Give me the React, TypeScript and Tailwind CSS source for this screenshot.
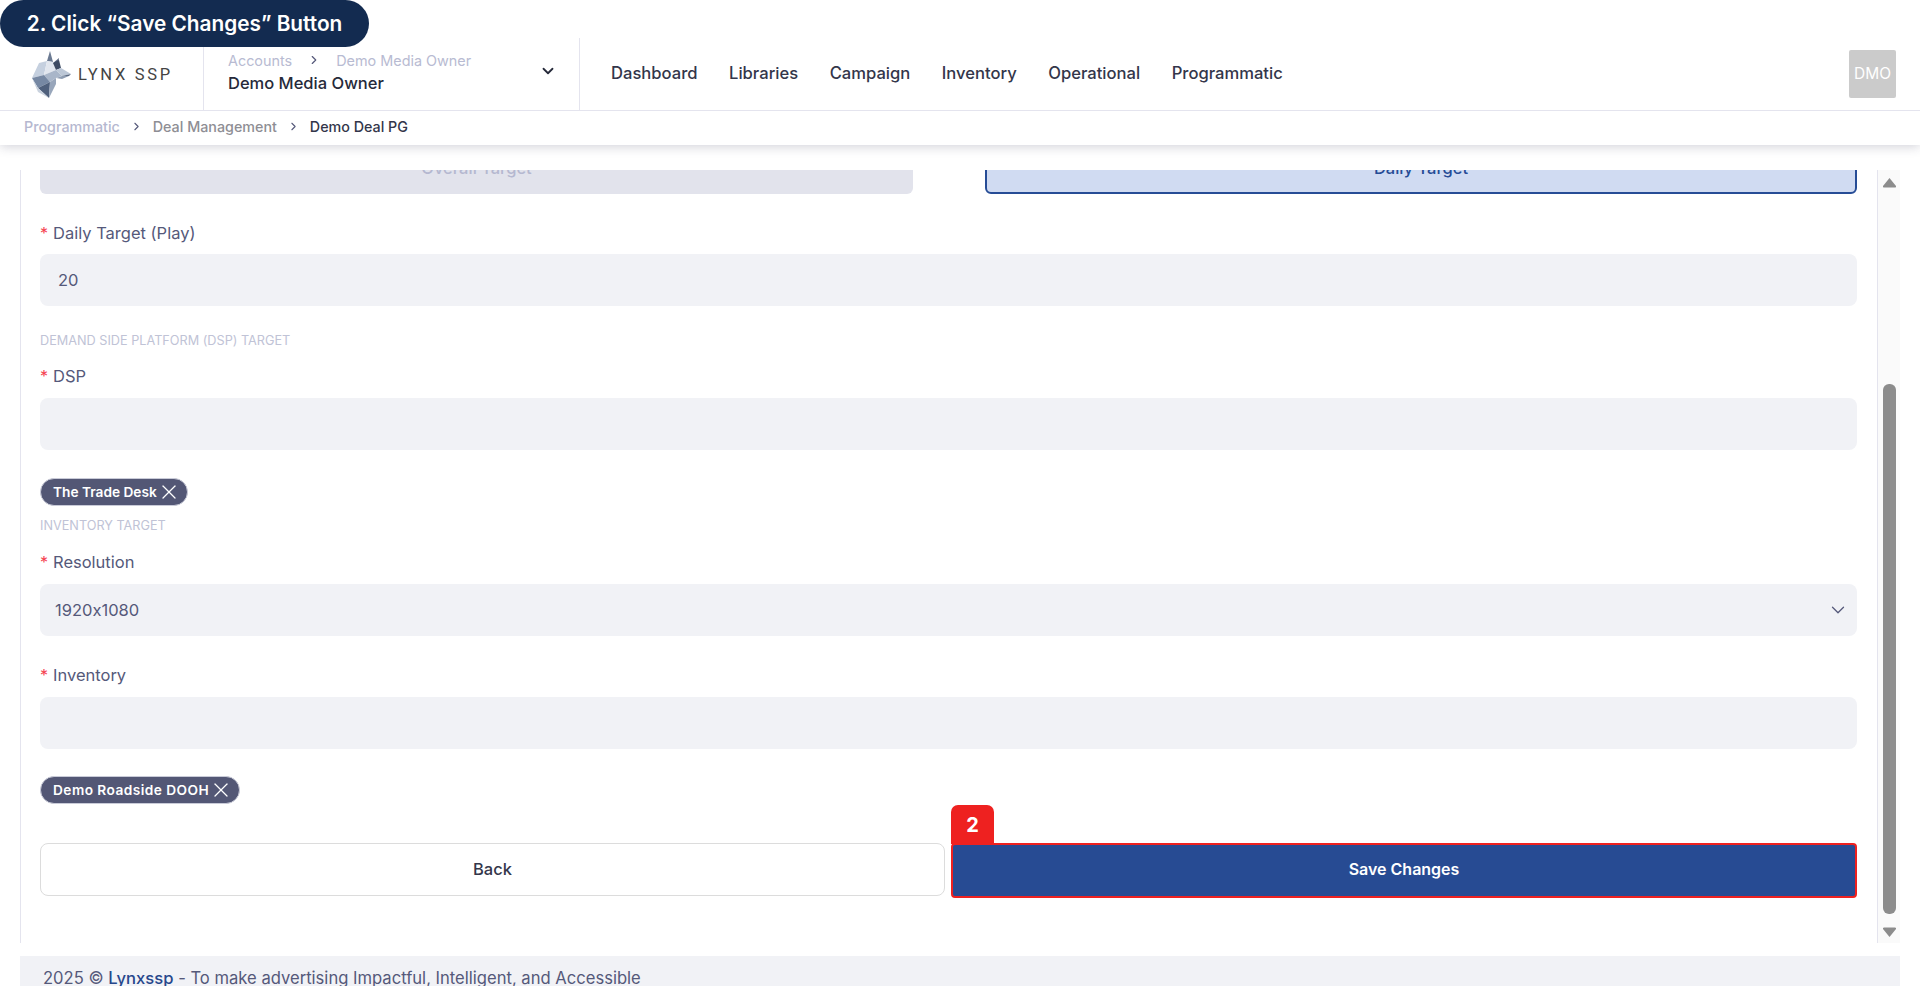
import { X, ChevronDown, ChevronRight } from "lucide-react";

function Wolf() {
  return (
    <svg width="52" height="54" viewBox="0 0 52 54" className="shrink-0">
      <polygon points="24,3 27,14 21,13" fill="#6b7a92" />
      <polygon points="33,10 32,19 27,15" fill="#5a6880" />
      <polygon points="21,13 13,15 6,30 18,27" fill="#c5d0df" />
      <polygon points="21,13 27,14 30,22 18,27" fill="#e1e6ee" />
      <polygon points="27,15 33,12 35,20 30,22" fill="#3d4a62" />
      <polygon points="30,22 35,20 45,26 36,28" fill="#bcc7d6" />
      <polygon points="45,26 43,28 36,28" fill="#5c6a82" />
      <polygon points="36,28 43,28 36,31 30,30" fill="#8f9db2" />
      <polygon points="18,27 30,22 36,28 30,30 24,34" fill="#a9b6c9" />
      <polygon points="6,30 18,27 24,34 12,40" fill="#7688a3" />
      <polygon points="12,40 24,34 23,50" fill="#4f607c" />
      <polygon points="24,34 30,30 30,36 23,50" fill="#98a6bb" />
      <polygon points="6,30 12,40 23,50 12,44" fill="#c9d2de" />
    </svg>
  );
}

function Label({ children, className }: { children: string; className: string }) {
  return (
    <div className={`flex h-[22px] items-center text-[16.5px] leading-[22px] text-[#55597a] ${className}`}>
      <span className="mr-[5px] w-[8px] text-[16px] text-[#f5414f]">*</span>
      {children}
    </div>
  );
}

function Section({ children, className }: { children: string; className: string }) {
  return <div className={`h-[14px] text-[12.7px] leading-[14px] text-[#c0c3d6] ${className}`}>{children}</div>;
}

function Chip({ children, className }: { children: string; className: string }) {
  return (
    <div className={`flex h-[28px] w-fit items-center rounded-full border border-[#c9cbd8] bg-[#535775] pl-[12px] pr-[6px] text-[13.7px] font-semibold text-white ${className}`}>
      {children}
      <X size={24} strokeWidth={1.3} />
    </div>
  );
}

function Input({ children, className }: { children?: React.ReactNode; className: string }) {
  return (
    <div className={`flex h-[52px] items-center rounded-[8px] bg-[#f1f2f6] text-[16.5px] text-[#55597a] ${className}`}>
      {children}
    </div>
  );
}

function Triangle({ down }: { down?: boolean }) {
  return (
    <svg width="15" height="11" viewBox="0 0 15 11" className={down ? "rotate-180" : ""}>
      <path d="M7.5 1 L14 9 Q14.5 10.5 13 10.5 L2 10.5 Q0.5 10.5 1 9 Z" fill="#8c8c8c" />
    </svg>
  );
}

export default function App() {
  return (
    <div className="relative flex h-[986px] flex-col overflow-hidden bg-white font-['Inter',sans-serif] [font-feature-settings:'calt'_0]">
      <div className="absolute left-0 top-0 z-20 flex h-[47px] w-[369px] items-center justify-center rounded-[24px] bg-[#132b50] text-[20.8px] font-semibold text-white">
        2. Click “Save Changes” Button
      </div>

      <header className="relative z-10 h-[145px] shrink-0 bg-white shadow-[0_2px_10px_rgba(60,60,90,0.22)]">
        <div className="flex h-[111px] items-stretch border-b border-[#e4e4ee] pt-[38px]">
          <div className="flex w-[204px] items-center border-r border-[#e4e4ee] pl-[26px] pt-[2px]">
            <Wolf />
            <span className="font-['Roboto',sans-serif] text-[16.5px] tracking-[2.7px] text-[#444444]">LYNX SSP</span>
          </div>
          <div className="relative flex w-[376px] flex-col border-r border-[#e4e4ee] pl-[24px] pt-[13px]">
            <div className="flex h-[20px] items-center text-[14.4px] text-[#b8bbd2]">
              Accounts
              <ChevronRight size={14} strokeWidth={2} className="ml-[15px] mr-[15px] -mt-[2px] text-[#55597a]" />
              Demo Media Owner
            </div>
            <div className="mt-[1px] text-[16.5px] font-medium leading-[22px] text-[#262a3a]">Demo Media Owner</div>
            <ChevronDown size={18} strokeWidth={2.4} className="absolute right-[22px] top-[24px] text-[#262a3a]" />
          </div>
          <nav className="flex items-center gap-[31.5px] pb-[2px] pl-[31px] text-[16.6px] font-medium text-[#33364a]">
            <span>Dashboard</span>
            <span>Libraries</span>
            <span>Campaign</span>
            <span>Inventory</span>
            <span>Operational</span>
            <span>Programmatic</span>
          </nav>
          <div className="ml-auto mr-[24px] flex h-[48px] w-[47px] self-center items-center justify-center rounded-[2px] bg-[#cbcbcb] text-[15.5px] text-white">
            DMO
          </div>
        </div>
        <div className="flex h-[31px] items-center pl-[24px] text-[14.3px] font-medium text-[#8e8e94]">
          <span className="text-[#b5b8d0]">Programmatic</span>
          <ChevronRight size={13} strokeWidth={2} className="mx-[10px] text-[#55597a]" />
          <span>Deal Management</span>
          <ChevronRight size={13} strokeWidth={2} className="mx-[10px] text-[#55597a]" />
          <span className="text-[#33364a]">Demo Deal PG</span>
        </div>
      </header>

      <div className="ml-[20px] mt-[25px] flex h-[773px] w-[1880px] shrink-0 border-l border-[#e4e4ee]">
        <main className="flex-1 overflow-hidden pl-[19px] pr-[20px]">
          <div className="-mt-[28px]">
            <div className="flex justify-between">
              <div className="flex h-[52px] w-[873px] items-center justify-center rounded-[6px] bg-[#e2e3ec] text-[16.5px] font-medium text-[#b5b8d0]">
                Overall Target
              </div>
              <div className="flex h-[52px] w-[872px] items-center justify-center rounded-[6px] border-2 border-[#264c96] bg-[#d0dbf2] text-[16.5px] font-medium text-[#264c96]">
                Daily Target
              </div>
            </div>
            <Label className="mt-[28px]">Daily Target (Play)</Label>
            <Input className="mt-[10px] pl-[18px]">20</Input>
            <Section className="mt-[28px]">DEMAND SIDE PLATFORM (DSP) TARGET</Section>
            <Label className="mt-[17px]">DSP</Label>
            <Input className="mt-[11px]" />
            <Chip className="mt-[28px]">The Trade Desk</Chip>
            <Section className="mt-[13px]">INVENTORY TARGET</Section>
            <Label className="mt-[18px]">Resolution</Label>
            <Input className="mt-[11px] justify-between pl-[15px] pr-[8px]">
              1920x1080
              <ChevronDown size={22} strokeWidth={1.4} />
            </Input>
            <Label className="mt-[28px]">Inventory</Label>
            <Input className="mt-[11px]" />
            <Chip className="mt-[27px] tracking-[0.45px]">Demo Roadside DOOH</Chip>
            <div className="mt-[39px] flex items-start">
              <button className="h-[53px] w-[905px] rounded-[8px] border border-[#dcdcdc] bg-white pb-[0px] text-[16.5px] font-medium text-[#33364a]">
                Back
              </button>
              <div className="relative ml-[6px] flex-1">
                <div className="absolute -top-[38px] left-0 flex h-[39px] w-[43px] items-center justify-center rounded-t-[7px] bg-[#ee2120] text-[20px] font-bold text-white">
                  2
                </div>
                <button className="h-[55px] w-full rounded-[4px] border-2 border-[#ee2120] bg-[#274b93] pb-[3px] text-[16px] font-semibold text-white">
                  Save Changes
                </button>
              </div>
            </div>
          </div>
        </main>
        <aside className="flex w-[23px] flex-col items-center border-l border-[#e4e4ee] bg-[#fafafa] pb-[5px] pt-[7px]">
          <Triangle />
          <div className="mt-auto h-[530px] w-[13px] rounded-[6px] bg-[#8c8c8c]" />
          <div className="mt-[13px]">
            <Triangle down />
          </div>
        </aside>
      </div>

      <footer className="ml-[20px] mt-[13px] h-[30px] w-[1880px] shrink-0 overflow-hidden bg-[#f1f2f6] pl-[23px] pt-[11px] text-[16.6px] leading-[22px] text-[#55597a]">
        2025 © <span className="font-medium text-[#27478c]">Lynxssp</span> - To make advertising Impactful, Intelligent, and Accessible
      </footer>
    </div>
  );
}
